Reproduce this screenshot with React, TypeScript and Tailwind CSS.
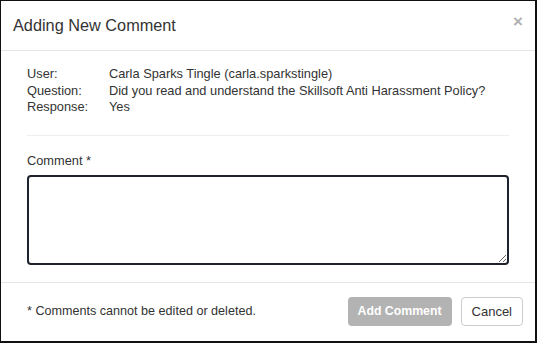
export default function App() {
  const rows = [
    { label: 'User:', value: 'Carla Sparks Tingle (carla.sparkstingle)' },
    { label: 'Question:', value: 'Did you read and understand the Skillsoft Anti Harassment Policy?' },
    { label: 'Response:', value: 'Yes' },
  ];

  return (
    <div
      className="w-[537px] h-[343px] bg-white border-t border-l border-r-2 border-b-2 border-[#111] flex flex-col text-[#333]"
      style={{ fontFamily: '"Liberation Sans", Arial, sans-serif' }}
    >
      {/* header */}
      <div className="h-[50px] flex items-center justify-between pl-[12px] pr-[12px] border-b border-[#e5e5e5] shrink-0">
        <h4 className="text-[16.3px] leading-none pb-[1px]">Adding New Comment</h4>
        <button className="text-[#b0b0b0] text-[17px] font-bold leading-none -mt-[8px]">×</button>
      </div>

      {/* body */}
      <div className="px-[26px] pt-[15px]">
        <div className="text-[12.8px] leading-[16.5px] pb-[19px] border-b border-[#eee]">
          {rows.map((r) => (
            <div key={r.label} className="flex">
              <span className="w-[82px] shrink-0">{r.label}</span>
              <span>{r.value}</span>
            </div>
          ))}
        </div>

        <div className="pt-[17px]">
          <label className="block text-[12.8px] leading-[16px] mb-[6px]">Comment *</label>
          <textarea
            autoFocus
            className="block w-full h-[90px] border-2 border-[#1f2330] rounded-[4px] px-[3px] py-[2px] text-[13px] caret-[#333] outline-none resize-y"
          />
        </div>
      </div>

      {/* footer */}
      <div className="mt-auto h-[58px] border-t border-[#e5e5e5] flex items-center justify-between pl-[26px] pr-[12px] mb-[1px]">
        <span className="text-[12.6px]">* Comments cannot be edited or deleted.</span>
        <div className="flex gap-[9px]">
          <button
            disabled
            className="h-[29px] px-[10px] rounded-[4px] bg-[#b3b3b3] text-white text-[12.3px] font-bold"
          >
            Add Comment
          </button>
          <button className="h-[29px] px-[10px] rounded-[4px] bg-white border border-[#ccc] text-[#333] text-[13px]">
            Cancel
          </button>
        </div>
      </div>
    </div>
  );
}
